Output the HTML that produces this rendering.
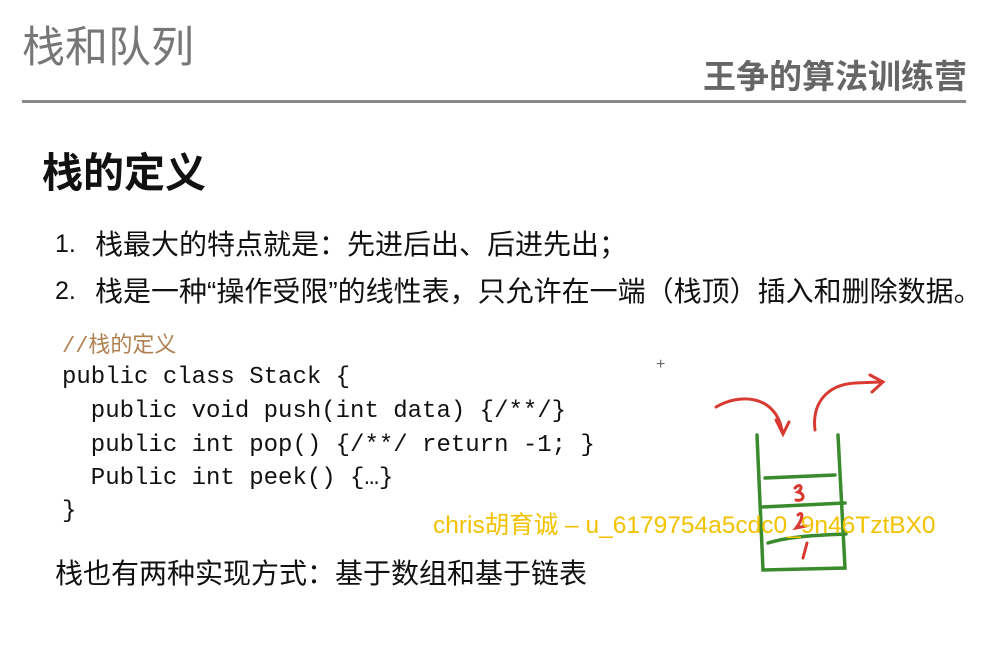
<!DOCTYPE html>
<html><head><meta charset="utf-8"><style>
body{margin:0;width:1008px;height:660px;background:#fff;position:relative;overflow:hidden;font-family:"Liberation Sans","Noto Sans CJK SC",sans-serif}
.a{position:absolute;white-space:pre}
.code{font-family:"Liberation Mono","Noto Sans CJK SC",monospace;font-size:24px;color:#111}
</style></head><body>
<div class="a" style="left:22px;top:13px;font-size:43px;color:#777">栈和队列</div>
<div class="a" style="left:703px;top:50px;font-size:33px;font-weight:bold;color:#666">王争的算法训练营</div>
<div class="a" style="left:22px;top:100px;width:944px;height:3px;background:#888"></div>
<div class="a" style="left:42px;top:139px;font-size:41px;font-weight:bold;color:#111">栈的定义</div>
<div class="a" style="left:55px;top:230px;font-size:25px;color:#111">1.</div>
<div class="a" style="left:95px;top:223px;font-size:28px;color:#111">栈最大的特点就是：先进后出、后进先出；</div>
<div class="a" style="left:55px;top:277px;font-size:25px;color:#111">2.</div>
<div class="a" style="left:95px;top:270px;font-size:28px;color:#111">栈是一种“操作受限”的线性表，只允许在一端（栈顶）插入和删除数据。</div>
<div class="a" style="left:62px;top:327px;font-size:22px;color:#b08050;font-family:'Liberation Mono','Noto Sans CJK SC',monospace">//栈的定义</div>
<div class="a code" style="left:62px;top:364px">public class Stack {</div>
<div class="a code" style="left:62px;top:398px">  public void push(int data) {/**/}</div>
<div class="a code" style="left:62px;top:432px">  public int pop() {/**/ return -1; }</div>
<div class="a code" style="left:62px;top:465px">  Public int peek() {…}</div>
<div class="a code" style="left:62px;top:498px">}</div>
<div class="a" style="left:55px;top:552px;font-size:28px;color:#111">栈也有两种实现方式：基于数组和基于链表</div>
<div class="a" style="left:656px;top:356px;font-size:16px;color:#666">+</div>
<svg class="a" style="left:700px;top:360px" width="250" height="220" viewBox="0 0 250 220">
<g fill="none" stroke="#d83a32" stroke-width="3" stroke-linecap="round">
<path d="M16 47 C40 33 75 35 82 70"/><path d="M76 60 L83 74 L89 62"/>
<path d="M115 70 C112 45 125 25 155 23 L180 22"/><path d="M170 15 L183 22 L172 32"/>
<path d="M95 128 C100 122 104 128 98 132 C106 134 104 142 96 140"/>
<path d="M98 155 C103 150 104 158 96 168 L106 166"/>
<path d="M107 183 L103 198"/>
</g>
<g fill="none" stroke="#3a8a2e" stroke-width="3.5" stroke-linecap="round">
<path d="M57 75 L63 210 L145 208 L138 75"/>
<path d="M65 118 L135 115"/><path d="M62 147 L145 143"/><path d="M68 183 C90 176 120 175 146 174"/>
</g></svg>
<div class="a" style="left:433px;top:506px;font-size:24.5px;color:#f2c200">chris胡育诚 – u_6179754a5cdc0_9n46TztBX0</div>
</body></html>
